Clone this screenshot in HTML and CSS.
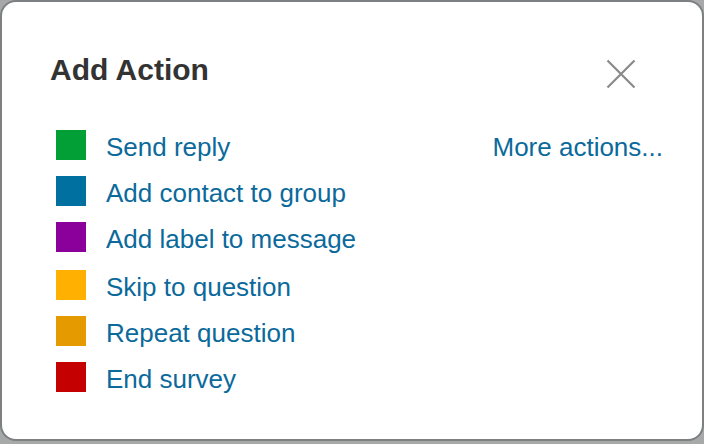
FILE: index.html
```html
<!DOCTYPE html>
<html>
<head>
<meta charset="utf-8">
<link rel="stylesheet" href="styles.css">
</head>
<body>
<div class="modal">
  <div class="header">
    <h1 class="title">Add Action</h1>
    <svg class="close" width="30" height="30" viewBox="0 0 30 30" aria-label="Close">
      <path d="M1.5 1.5 L28.5 28.5 M28.5 1.5 L1.5 28.5" stroke="#8a8a8a" stroke-width="2.2" fill="none"/>
    </svg>
  </div>
  <div class="body">
    <div class="lists">
      <ul class="group">
        <li class="item"><span class="swatch green"></span><a class="label">Send reply</a></li>
        <li class="item"><span class="swatch blue"></span><a class="label">Add contact to group</a></li>
        <li class="item"><span class="swatch purple"></span><a class="label">Add label to message</a></li>
      </ul>
      <ul class="group group-survey">
        <li class="item"><span class="swatch yellow"></span><a class="label">Skip to question</a></li>
        <li class="item"><span class="swatch orange"></span><a class="label">Repeat question</a></li>
        <li class="item"><span class="swatch red"></span><a class="label">End survey</a></li>
      </ul>
    </div>
    <a class="more">More actions...</a>
  </div>
</div>
</body>
</html>
```

FILE: styles.css
```css
html, body {
  margin: 0;
  padding: 0;
}
body {
  width: 704px;
  height: 444px;
  background: #a7a8a8;
  font-family: "Liberation Sans", Arial, sans-serif;
  overflow: hidden;
}
.modal {
  box-sizing: border-box;
  width: 704px;
  height: 441px;
  background: #ffffff;
  border: 2px solid #7c8082;
  border-radius: 16px;
  padding: 51px 39px 0 48px;
}
.header {
  display: flex;
  justify-content: space-between;
  align-items: flex-start;
}
.title {
  margin: 0;
  font-size: 30px;
  line-height: 34px;
  font-weight: bold;
  color: #333333;
}
.close {
  display: block;
  margin-top: 6px;
  margin-right: 27px;
}
.body {
  display: flex;
  justify-content: space-between;
  align-items: flex-start;
  margin-top: 41px;
}
.group {
  list-style: none;
  margin: 0;
  padding: 0 0 0 6px;
}
.group-survey {
  margin-top: 2px;
}
.item {
  display: flex;
  align-items: flex-start;
  height: 46px;
}
.swatch {
  display: block;
  width: 30px;
  height: 30px;
  margin-right: 20px;
  flex: none;
}
.green { background: #019f35; }
.blue { background: #0070a0; }
.purple { background: #8b009b; }
.yellow { background: #ffb000; }
.orange { background: #e59b00; }
.red { background: #c40000; }
.label, .more {
  font-size: 26px;
  line-height: 30px;
  padding-top: 2px;
  color: #0b6a9b;
  text-decoration: none;
  white-space: nowrap;
}
```
